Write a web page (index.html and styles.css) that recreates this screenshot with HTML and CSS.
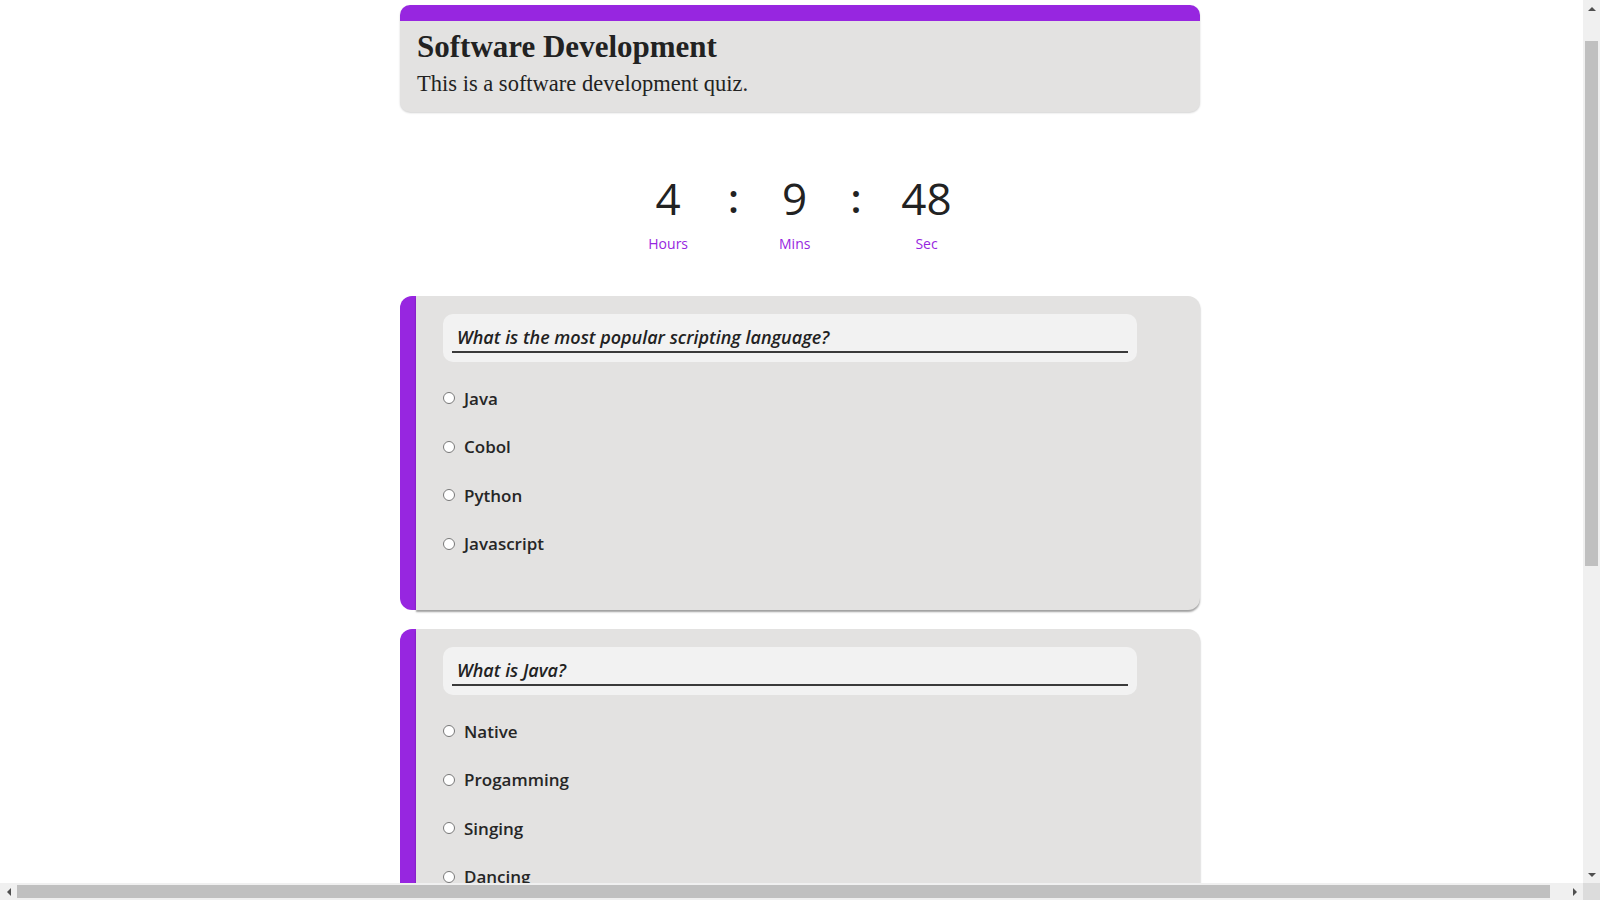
FILE: index.html
```html
<!DOCTYPE html>
<html lang="en">
<head>
<meta charset="utf-8">
<title>Software Development Quiz</title>
<link rel="stylesheet" href="styles.css">
</head>
<body>
<main class="page">
  <header class="quiz-head">
    <h1 class="quiz-title">Software Development</h1>
    <p class="quiz-desc">This is a software development quiz.</p>
  </header>

  <section class="timer">
    <div class="unit"><span class="num">4</span><span class="lbl">Hours</span></div>
    <span class="colon">:</span>
    <div class="unit"><span class="num">9</span><span class="lbl">Mins</span></div>
    <span class="colon">:</span>
    <div class="unit"><span class="num">48</span><span class="lbl">Sec</span></div>
  </section>

  <form class="questions">
    <div class="q">
      <div class="q-bar"></div>
      <div class="q-card">
        <div class="q-box"><h3 class="q-text">What is the most popular scripting language?</h3></div>
        <div class="opts">
          <label class="opt"><input type="radio" name="q1"><span>Java</span></label>
          <label class="opt"><input type="radio" name="q1"><span>Cobol</span></label>
          <label class="opt"><input type="radio" name="q1"><span>Python</span></label>
          <label class="opt"><input type="radio" name="q1"><span>Javascript</span></label>
        </div>
      </div>
    </div>

    <div class="q">
      <div class="q-bar"></div>
      <div class="q-card">
        <div class="q-box"><h3 class="q-text">What is Java?</h3></div>
        <div class="opts">
          <label class="opt"><input type="radio" name="q2"><span>Native</span></label>
          <label class="opt"><input type="radio" name="q2"><span>Progamming</span></label>
          <label class="opt"><input type="radio" name="q2"><span>Singing</span></label>
          <label class="opt"><input type="radio" name="q2"><span>Dancing</span></label>
        </div>
      </div>
    </div>
  </form>
</main>

<div class="sb-v" aria-hidden="true">
  <span class="arr arr-up"></span>
  <div class="sb-v-track"><div class="sb-v-thumb"></div></div>
  <span class="arr arr-down"></span>
</div>
<div class="sb-h" aria-hidden="true">
  <span class="arr arr-left"></span>
  <div class="sb-h-track"><div class="sb-h-thumb"></div></div>
  <span class="arr arr-right"></span>
  <span class="sb-corner"></span>
</div>
</body>
</html>
```

FILE: styles.css
```css
html,
body {
  overflow: hidden;
}

body {
  margin: 0;
  width: 100vw;
  background: #ffffff;
  color: #222222;
  font-family: "Open Sans", "Noto Sans", sans-serif;
}

.page {
  width: 800px;
  margin: 0 auto;
  padding: 5px 0 480px;
}

/* header card */
.quiz-head {
  background: #e3e2e1;
  border-top: 16px solid #9726e0;
  border-radius: 10px;
  padding: 9px 17px 14px;
  box-shadow: 0 1px 2px rgba(0, 0, 0, 0.18);
}
.quiz-title {
  margin: 0;
  font-family: "Liberation Serif", serif;
  font-weight: 700;
  font-size: 31px;
  line-height: 34px;
  color: #222;
}
.quiz-desc {
  margin: 6px 0 0;
  font-family: "Liberation Serif", serif;
  font-size: 22.5px;
  line-height: 28px;
  color: #222;
}

/* timer */
.timer {
  display: flex;
  justify-content: center;
  align-items: flex-start;
  gap: 40px;
  margin-top: 64px;
}
.unit {
  display: flex;
  flex-direction: column;
  align-items: center;
}
.num {
  font-size: 44px;
  line-height: 44px;
  color: #222;
}
.colon {
  font-size: 40px;
  line-height: 44px;
  font-weight: 600;
  color: #222;
}
.lbl {
  margin-top: 14px;
  font-size: 14px;
  line-height: 20px;
  color: #9726e0;
}

/* questions */
.questions {
  margin-top: 42px;
  display: flex;
  flex-direction: column;
  gap: 19px;
}
.q {
  display: flex;
}
.q-bar {
  width: 16px;
  flex: none;
  background: #9726e0;
  border-radius: 12px 0 0 12px;
}
.q-card {
  flex: 1;
  background: #e3e2e1;
  border-radius: 0 12px 12px 0;
  box-shadow: 0 2px 2px rgba(0, 0, 0, 0.38);
  padding: 18px 0 42px 27px;
}
.q-box {
  width: 694px;
  box-sizing: border-box;
  background: #f2f2f2;
  border-radius: 10px;
  padding: 9px;
}
.q-text {
  margin: 0;
  padding-left: 5px;
  font-size: 18px;
  line-height: 28px;
  font-style: italic;
  font-weight: 600;
  color: #222;
  border-bottom: 2px solid #3a3a3a;
}
.opts {
  margin-top: 12px;
  display: flex;
  flex-direction: column;
}
.opt {
  height: 48.5px;
  display: flex;
  align-items: center;
  gap: 9px;
  font-size: 17px;
  font-weight: 600;
  color: #262626;
}
.opt input {
  margin: 0;
  width: 12px;
  height: 12px;
}

/* window scrollbars (drawn over the page edge) */
.sb-v {
  position: fixed;
  top: 0;
  right: 0;
  width: 17px;
  height: 883px;
  background: #f0f0f0;
  display: flex;
  flex-direction: column;
  align-items: center;
}
.sb-v-track {
  flex: 1;
  width: 13px;
  padding-top: 24px;
}
.sb-v-thumb {
  height: 525px;
  background: #c0c0c0;
}
.sb-h {
  position: fixed;
  left: 0;
  bottom: 0;
  width: 1600px;
  height: 17px;
  background: #f0f0f0;
  display: flex;
  align-items: center;
}
.sb-h-track {
  width: 1549px;
  height: 13px;
}
.sb-h-thumb {
  width: 1533px;
  height: 13px;
  background: #c0c0c0;
}
.sb-corner {
  width: 17px;
  height: 17px;
  background: #dcdcdc;
}
.arr {
  flex: none;
  width: 17px;
  height: 17px;
  display: flex;
  align-items: center;
  justify-content: center;
}
.arr::before {
  content: "";
  width: 0;
  height: 0;
  border: 4px solid transparent;
}
.arr-up::before {
  border-top: 0;
  border-bottom-color: #505050;
}
.arr-down::before {
  border-bottom: 0;
  border-top-color: #505050;
}
.arr-left::before {
  border-left: 0;
  border-right-color: #505050;
}
.arr-right::before {
  border-right: 0;
  border-left-color: #505050;
}
```
